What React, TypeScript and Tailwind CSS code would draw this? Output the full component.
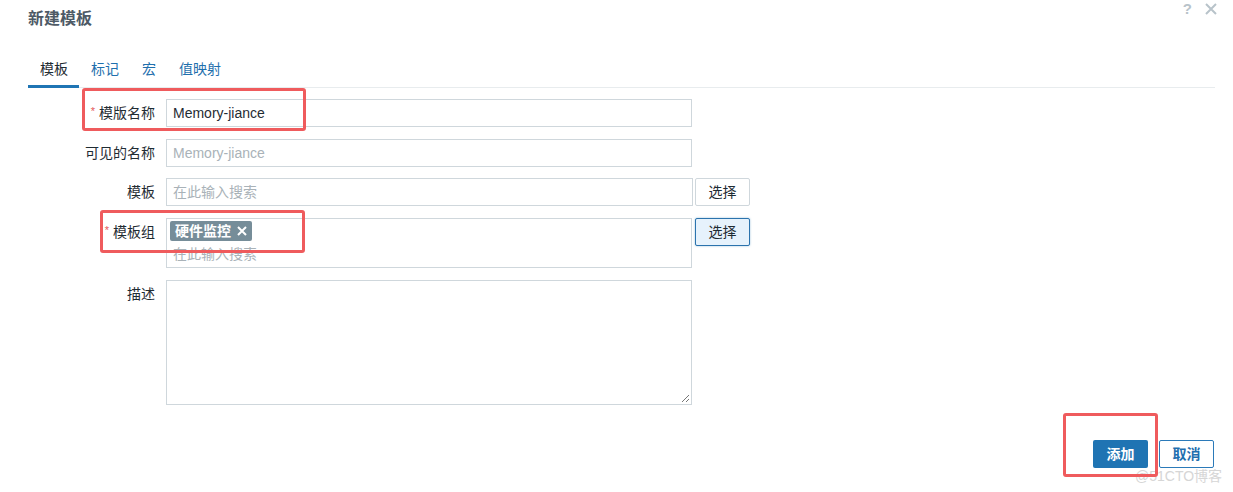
import React from 'react';

const font = { fontFamily: '"Liberation Sans", "Noto Sans CJK SC", sans-serif' };

const Label: React.FC<{ text: string; required?: boolean }> = ({ text, required }) => (
  <div className="w-[155px] shrink-0 flex justify-end items-start pt-[5px] text-[14px] leading-[18px] text-[#1f2c33]">
    {required && <span className="text-[#e45959] text-[11px] mr-[4px] leading-[14px]">*</span>}
    {text}
  </div>
);

const App: React.FC = () => {
  return (
    <div className="relative w-[1233px] h-[492px] bg-white overflow-hidden" style={font}>
      {/* header */}
      <div className="flex items-start justify-between h-[40px]">
        <h2 className="pl-[28px] pt-[8px] text-[16px] leading-[22px] font-bold text-[#4e5a66]">新建模板</h2>
        <div className="flex items-center gap-[13px] pr-[16px] pt-[1px] text-[#b8c3ca]">
          <span className="text-[15px] leading-[16px] font-bold">?</span>
          <svg width="12" height="12" viewBox="0 0 12 12">
            <path d="M1 1 L11 11 M11 1 L1 11" stroke="currentColor" strokeWidth="2" />
          </svg>
        </div>
      </div>

      {/* tabs */}
      <div className="mt-[20px] ml-[28px] w-[1187px] flex border-b border-[#e8ecee] text-[14px] leading-[18px]">
        <div className="pl-[12px] pr-[11px] pb-[7px] border-b-[3px] border-[#1f75b4] text-[#1f2c33] -mb-[1px]">模板</div>
        <div className="pl-[12px] pr-[11px] pb-[7px] text-[#1f6fad]">标记</div>
        <div className="pl-[12px] pr-[11px] pb-[7px] text-[#1f6fad]">宏</div>
        <div className="pl-[12px] pr-[12px] pb-[7px] text-[#1f6fad]">值映射</div>
      </div>

      {/* form */}
      <div className="mt-[11px] flex flex-col">
        <div className="flex">
          <Label text="模版名称" required />
          <div className="ml-[11px] w-[526px] h-[28px] border border-[#cfd7dc] px-[6px] flex items-center text-[14px] text-[#1f2c33]">
            Memory-jiance
          </div>
        </div>

        <div className="flex mt-[12px]">
          <Label text="可见的名称" />
          <div className="ml-[11px] w-[526px] h-[28px] border border-[#cfd7dc] px-[6px] flex items-center text-[14px] text-[#a9b2b8]">
            Memory-jiance
          </div>
        </div>

        <div className="flex mt-[11px]">
          <Label text="模板" />
          <div className="ml-[11px] w-[527px] h-[28px] border border-[#cfd7dc] px-[6px] flex items-center text-[14px] text-[#a9b2b8]">
            在此输入搜索
          </div>
          <button className="ml-[2px] w-[55px] h-[28px] border border-[#cfd7dc] rounded-[2px] bg-white text-[14px] text-[#1f2c33]">
            选择
          </button>
        </div>

        <div className="flex mt-[12px]">
          <Label text="模板组" required />
          <div className="ml-[11px] w-[526px] h-[50px] border border-[#cfd7dc] px-[3px] pt-[2px] flex flex-col text-[14px]">
            <div className="self-start h-[20px] px-[5px] rounded-[2px] bg-[#768d99] text-white font-bold text-[14px] leading-[20px] flex items-center gap-[6px]">
              硬件监控
              <svg width="10" height="10" viewBox="0 0 10 10">
                <path d="M1 1 L9 9 M9 1 L1 9" stroke="white" strokeWidth="2" />
              </svg>
            </div>
            <div className="pl-[3px] mt-[4px] text-[#a9b2b8] leading-[18px]">在此输入搜索</div>
          </div>
          <button className="ml-[3px] w-[55px] h-[28px] border border-[#2b73ad] rounded-[2px] bg-[#e6f2fc] text-[14px] text-[#1f2c33] shadow-[0_0_2px_rgba(31,117,180,0.5)]">
            选择
          </button>
        </div>

        <div className="flex mt-[12px]">
          <Label text="描述" />
          <div className="relative ml-[11px] w-[526px] h-[125px] border border-[#cfd7dc]">
            <svg width="9" height="9" viewBox="0 0 9 9" className="absolute right-[1px] bottom-[1px]">
              <path d="M8 1 L1 8 M8 5 L5 8" stroke="#777" strokeWidth="1" />
            </svg>
          </div>
        </div>
      </div>

      {/* footer */}
      <div className="absolute right-[19px] top-[440px] flex gap-[11px]">
        <button className="w-[55px] h-[28px] rounded-[2px] bg-[#1f74b3] text-white text-[14px] font-bold">添加</button>
        <button className="w-[55px] h-[28px] rounded-[2px] border border-[#2b7ab9] bg-white text-[#1f6faf] text-[14px] font-bold">取消</button>
      </div>

      {/* watermark */}
      <div className="absolute left-[1135px] top-[467px] text-[14px] leading-[18px] text-[#d6d6d6]">@51CTO博客</div>

      {/* red annotation boxes */}
      <div className="absolute left-[82px] top-[88px] w-[224px] h-[43px] border-[3px] border-[#ef5b5d] rounded-[3px]" />
      <div className="absolute left-[100px] top-[210px] w-[205px] h-[43px] border-[3px] border-[#ef5b5d] rounded-[3px]" />
      <div className="absolute left-[1063px] top-[413px] w-[95px] h-[64px] border-[3px] border-[#ef5b5d] rounded-[3px]" />
    </div>
  );
};

export default App;
